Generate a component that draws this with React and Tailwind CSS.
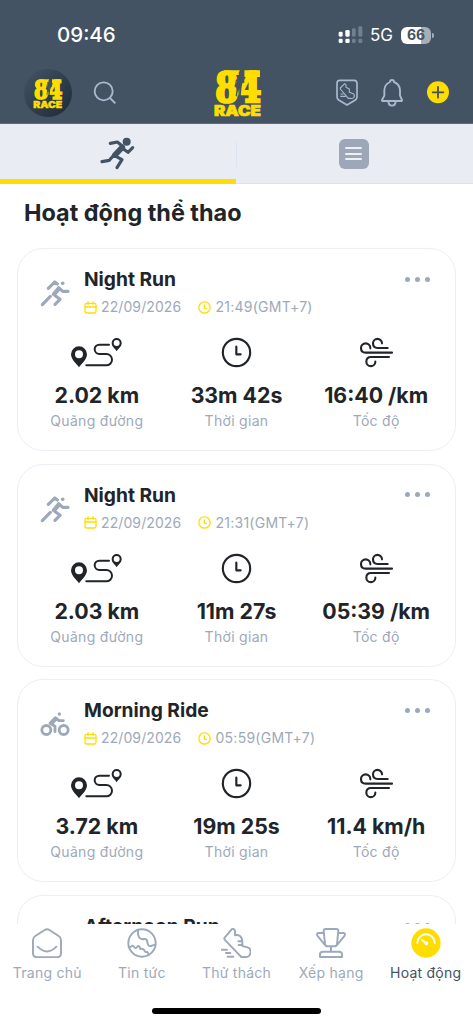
import React from "react";

function Logo({ className }) {
  return (
    <svg viewBox="0 0 142 139" className={className} overflow="visible" aria-label="84 RACE">
      <g fill="#ffdd00" stroke="#ffdd00">
        <text x="4" y="95" fontFamily="DejaVu Serif" fontWeight="700" fontSize="121" strokeWidth="8" textLength="136" lengthAdjust="spacingAndGlyphs">84</text>
        <text x="0" y="137" fontFamily="Inter" fontWeight="900" fontSize="43" strokeWidth="2" textLength="139" lengthAdjust="spacingAndGlyphs">RACE</text>
      </g>
      <path fill="#ffdd00" d="M30 1h46v14H30ZM90 1h46v20H90Z" />
      <path fill="#435364" d="M80 2c5 0 6 7 3 11l5 5 2 19-4 2-2-12-2 20-3 31h-5l1-27-5 10-3 18-3-3 3-22 3-13 1-15-5 11-1 12-3-2 2-16 10-12-1-9c0-5 3-8 7-8Z" />
    </svg>
  );
}

function StatusBar() {
  return (
    <div className="flex h-[69px] items-center justify-between pl-[57px] pr-[39px] pt-[1px] text-white">
      <span className="text-[20.5px] font-medium leading-none">09:46</span>
      <div className="flex items-center">
        <svg width="25" height="18" viewBox="415 79 75 54" fill="#fff">
          <rect x="417" y="96" width="12" height="15" rx="4" />
          <rect x="417" y="117" width="12" height="13" rx="4" />
          <rect x="437" y="91" width="13" height="20" rx="4" />
          <rect x="437" y="117" width="13" height="13" rx="4" />
          <g fill="#71808f">
            <rect x="457" y="86" width="11" height="25" rx="4" />
            <rect x="457" y="117" width="11" height="13" rx="4" />
            <rect x="476" y="80" width="12" height="31" rx="4" />
            <rect x="476" y="117" width="12" height="13" rx="4" />
          </g>
        </svg>
        <span className="ml-[7px] text-[17px] leading-none">5G</span>
        <div className="ml-[8px] flex h-[17px] w-[30px] items-center justify-center rounded-[6px] bg-[linear-gradient(90deg,#fff_66%,#a6aeb7_66%)] text-[14px] font-bold leading-none text-[#435364]">66</div>
        <div className="ml-px h-[5px] w-[2px] rounded-r-full bg-[#a6aeb7]" />
      </div>
    </div>
  );
}

function Header() {
  return (
    <header className="h-[124px] shrink-0 border-b border-[#5d6b7a] bg-[#435364]">
      <StatusBar />
      <div className="grid h-12 grid-cols-[1fr_48px_1fr] items-center">
        <div className="flex items-center gap-[21px] pl-6">
          <div className="flex h-12 w-12 items-center justify-center rounded-full bg-linear-to-br from-[#435565] to-[#1e2a38]">
            <Logo className="h-[29px] w-[30px]" />
          </div>
          <svg width="24" height="24" viewBox="279 242 72 72" fill="none" stroke="#a9bad0" strokeWidth="5.5">
            <circle cx="311" cy="273" r="27" />
            <path d="m330 293 16 16" />
          </svg>
        </div>
        <Logo className="ml-[1px] h-[47px] w-[48px]" />
        <div className="flex items-center justify-end pr-[23px]">
          <svg width="24" height="28" viewBox="404 236 72 84" fill="none" stroke="#a9bad0" strokeWidth="4.5" strokeLinejoin="round" strokeLinecap="round">
            <path d="M418 240h43q9 0 9 9v40q0 6-5 10l-25 15-25-15q-5-4-5-10v-40q0-9 8-9Z" strokeWidth="5" />
            <path strokeWidth="3.3" d="m420 263 13-13 4 3v8l10 5v10l12 4q5 3 2 11-3 5-12 3h-5l-24-28Zm2 18h6m-7 7h14" />
          </svg>
          <svg className="ml-[21px]" width="24" height="28" viewBox="541 236 72 84" fill="none" stroke="#a9bad0" strokeWidth="5.6" strokeLinejoin="round">
            <path d="M571 245a6 6 0 0 1 12 0q17 6 18 25v16l6 13q1 3-3 3h-54q-4 0-3-3l7-13v-16q1-19 17-25Zm-5 58q1 13 11 13t11-13" />
          </svg>
          <svg className="ml-[22px]" width="24" height="24" viewBox="0 0 72 72">
            <circle cx="36" cy="34" r="33" fill="#ffdd00" />
            <path d="M36 18v32M20 34h32" stroke="#435364" strokeWidth="5.5" strokeLinecap="round" />
          </svg>
        </div>
      </div>
    </header>
  );
}

function Tabs() {
  return (
    <div className="grid h-[60px] shrink-0 grid-cols-[235.5px_1fr] bg-[#e9edf3]">
      <div className="flex items-center justify-center border-b-[5px] border-[#ffdd00]">
        <svg className="mt-[4px]" width="35" height="33" viewBox="301 53 105 99" fill="none" stroke="#435364" strokeWidth="9.5" strokeLinecap="round" strokeLinejoin="round">
          <circle cx="381" cy="67" r="12" fill="#435364" stroke="none" />
          <path d="m332 72 21-4 15 12-25 28 24 13-15 24M307 127l22-4 17-20M367 86l18 13 14-14" />
          <path d="m368 84-22 23" strokeWidth="17" />
        </svg>
      </div>
      <div className="flex items-center border-b border-[#dde3ea]">
        <div className="h-[26px] w-px bg-[#dae5f0]" />
        <div className="flex flex-1 justify-center pr-[2px]">
          <div className="flex h-[30px] w-[30px] flex-col items-center justify-center gap-[3.5px] rounded-[6px] bg-[#9da7b7]">
            <div className="h-[2px] w-[17px] rounded-full bg-[#edf0f5]" />
            <div className="h-[2px] w-[17px] rounded-full bg-[#edf0f5]" />
            <div className="h-[2px] w-[17px] rounded-full bg-[#edf0f5]" />
          </div>
        </div>
      </div>
    </div>
  );
}

function RunIcon() {
  return (
    <svg width="30" height="28" viewBox="91 117 90 84" fill="none" stroke="#9da9ba" strokeWidth="9.5" strokeLinecap="round" strokeLinejoin="round">
      <circle cx="159" cy="130" r="5.5" fill="#9da9ba" stroke="none" />
      <path d="m116 145 19-19 8 6M175 154h-16l-12-11-16 20 20 15-15 15M98 194l24-25" />
      <path d="m148 147-14 15" strokeWidth="12" />
    </svg>
  );
}

function RideIcon() {
  return (
    <svg width="30" height="28" viewBox="91 104 90 84" fill="none" stroke="#9da9ba" strokeWidth="8.5" strokeLinecap="round" strokeLinejoin="round">
      <circle cx="149" cy="116" r="5" fill="#9da9ba" stroke="none" />
      <circle cx="110" cy="164" r="13.5" />
      <circle cx="162" cy="164" r="13.5" />
      <path d="M136 169v-16l-15-9 16-17 11 9h13" />
      <path d="m138 131-12 12" strokeWidth="12" />
    </svg>
  );
}

function RouteIcon() {
  return (
    <svg width="53" height="31" viewBox="180 290 159 93" fill="none" stroke="#212529" strokeWidth="6" strokeLinecap="round">
      <path fill="#212529" stroke="none" fillRule="evenodd" d="M207 381c-4-8-24-22-24-39a24 24 0 0 1 48 0c0 17-20 31-24 39Zm0-51a12 12 0 1 0 0 24 12 12 0 0 0 0-24Z" />
      <path d="M229 375h60a17 17 0 0 0 0-34h-21a14 14 0 0 1 0-28h29" />
      <path fill="#212529" stroke="none" fillRule="evenodd" d="M320 333c-3-7-15-13-15-25a15 15 0 0 1 30 0c0 12-12 18-15 25Zm0-34a9 9 0 1 0 0 18 9 9 0 0 0 0-18Z" />
    </svg>
  );
}

function ClockIcon() {
  return (
    <svg width="31" height="31" viewBox="633 291 93 93" fill="none" stroke="#212529" strokeWidth="6.5" strokeLinecap="round" strokeLinejoin="round">
      <circle cx="679.5" cy="337.5" r="41" />
      <path d="M679 320v23h13" />
    </svg>
  );
}

function WindIcon() {
  return (
    <svg width="35" height="31" viewBox="372 291 105 93" fill="none" stroke="#212529" strokeWidth="6.3" strokeLinecap="round">
      <path d="M406 325v-1a14 14 0 0 0-28 0q0 14 14 14h79M441 310a13.500 13.500 0 0 0-27 0q0 14 14 14h30M462 351h-54q-14 0-14 14a13.500 13.500 0 0 0 27 0" />
    </svg>
  );
}

function Stat({ icon, value, label }) {
  return (
    <div className="flex flex-col items-center">
      <div className="flex h-[31px] items-center">{icon}</div>
      <div className="mt-[13px] whitespace-nowrap text-[21.3px] font-bold leading-[28px] text-[#212529]">{value}</div>
      <div className="mt-[3px] text-[14px] leading-[18px] tracking-[0.3px] text-[#9da9ba]">{label}</div>
    </div>
  );
}

function ActivityCard({ icon, title, time, distance, duration, speed }) {
  return (
    <article className="h-[203px] shrink-0 rounded-[26px] border border-[#ebeff5] px-[9px] pt-[18px]">
      <div className="flex h-[54px]">
        <div className="ml-[13px] mt-[12px] w-[44px]">{icon}</div>
        <div className="flex-1">
          <div className="flex h-6 items-center justify-between pr-[16px]">
            <h2 className="text-[19.200px] font-bold leading-6 text-[#212529]">{title}</h2>
            <div className="flex gap-[5px]">
              <i className="h-[5px] w-[5px] rounded-full bg-[#9da9ba]" />
              <i className="h-[5px] w-[5px] rounded-full bg-[#9da9ba]" />
              <i className="h-[5px] w-[5px] rounded-full bg-[#9da9ba]" />
            </div>
          </div>
          <div className="mt-[6px] flex h-5 items-center text-[14px] leading-5 tracking-[0.1px] text-[#9da9ba]">
            <svg width="13" height="13" viewBox="0 0 39 39" fill="none" stroke="#ffdd00" strokeWidth="3.8" strokeLinejoin="round" strokeLinecap="round">
              <rect x="3" y="7" width="33" height="29" rx="5" />
              <path d="M3 18h33M12 2v9M27 2v9" />
            </svg>
            <span className="ml-[4px] w-[97px]">22/09/2026</span>
            <svg width="13" height="13" viewBox="0 0 39 39" fill="none" stroke="#ffdd00" strokeWidth="3.8" strokeLinecap="round">
              <circle cx="19.500" cy="19.500" r="17" />
              <path d="M19 12v10h6" />
            </svg>
            <span className="ml-[4.5px] tracking-[0.25px]">{time}(GMT+7)</span>
          </div>
        </div>
      </div>
      <div className="mt-[16px] grid grid-cols-3">
        <Stat icon={<RouteIcon />} value={distance} label="Quãng đường" />
        <Stat icon={<ClockIcon />} value={duration} label="Thời gian" />
        <Stat icon={<WindIcon />} value={speed} label="Tốc độ" />
      </div>
    </article>
  );
}

const navIcons = {
  home: <path d="m10 24 28-18q7-5 14 0l28 18q7 4 7 12v39q0 13-13 13H16Q3 88 3 75V36q0-8 7-12Zm7 32q28 29 56 0" />,
  globe: (
    <>
      <circle cx="45" cy="45" r="41" />
      <path d="M33 7q-1 16 5 23 6 5 13 3 9-1 10 8 1 15 11 13 8-3 13-4M5 57q6 1 8-2 4-4 8 1 5 8 10 0 3-5 7 1l2 6q8-2 12 4 2 7 9 5 3 1 3 9" />
    </>
  ),
  shoe: <path d="m11 29 21-25q3-3 7 0l3 4v14q8-3 15 2 7 6 7 19v11l16 4q11 3 8 18-2 11-14 11H61Q41 66 13 37q-5-5-2-8Zm41 11h12M53 51h12M2 65h16M15 75h13M20 86h17" />,
  trophy: <path d="M23 8q0-5 6-5h32q6 0 6 5l-4 40q-1 7-7 7H34q-6 0-7-7L23 8Zm0 7H8q-7 0-4 8l22 27M67 15h15q7 0 4 8L64 50M45 56v15M21 71h48q9 0 9 8v8H12v-8q0-8 9-8Z" />,
};

function NavItem({ icon, label, active }) {
  return (
    <div className={active ? "flex flex-col items-center text-[#435364]" : "flex flex-col items-center text-[#9da9ba]"}>
      <svg width="30" height="30" viewBox="0 0 90 90" fill="none" stroke="currentColor" strokeWidth="5.8" strokeLinecap="round" strokeLinejoin="round">
        {active ? (
          <g stroke="#fff" strokeWidth="6">
            <circle cx="45" cy="45" r="44" fill="#ffdd00" stroke="none" />
            <path d="M19 45a26 26 0 0 1 52 0M33 36l12 10" />
            <circle cx="46" cy="46" r="3" fill="#fff" />
          </g>
        ) : (
          navIcons[icon]
        )}
      </svg>
      <span className="mt-[6px] whitespace-nowrap text-[14px] leading-[18px] tracking-[0.25px]">{label}</span>
    </div>
  );
}

export default function App() {
  return (
    <div className="flex h-[1024px] w-[473px] flex-col overflow-hidden bg-white font-['Inter',sans-serif]">
      <Header />
      <Tabs />
      <main className="flex min-h-0 flex-1 flex-col overflow-hidden pl-[17px] pr-[17px]">
        <h1 className="ml-[7px] mt-[14px] shrink-0 text-[23.4px] font-bold leading-[30px] text-[#212529]">Hoạt động thể thao</h1>
        <div className="mt-[20px] flex flex-col gap-[12.500px]">
          <ActivityCard icon={<RunIcon />} title="Night Run" time="21:49" distance="2.02 km" duration="33m 42s" speed="16:40 /km" />
          <ActivityCard icon={<RunIcon />} title="Night Run" time="21:31" distance="2.03 km" duration="11m 27s" speed="05:39 /km" />
          <ActivityCard icon={<RideIcon />} title="Morning Ride" time="05:59" distance="3.72 km" duration="19m 25s" speed="11.4 km/h" />
          <ActivityCard icon={<RunIcon />} title="Afternoon Run" time="16:30" distance="2.10 km" duration="15m 10s" speed="07:13 /km" />
        </div>
      </main>
      <footer className="flex h-[100px] shrink-0 flex-col items-center justify-between bg-white pb-[10px] pt-[4px]">
        <nav className="grid w-full grid-cols-5">
          <NavItem icon="home" label="Trang chủ" />
          <NavItem icon="globe" label="Tin tức" />
          <NavItem icon="shoe" label="Thử thách" />
          <NavItem icon="trophy" label="Xếp hạng" />
          <NavItem label="Hoạt động" active />
        </nav>
        <div className="h-[6px] w-[169px] rounded-full bg-black" />
      </footer>
    </div>
  );
}
